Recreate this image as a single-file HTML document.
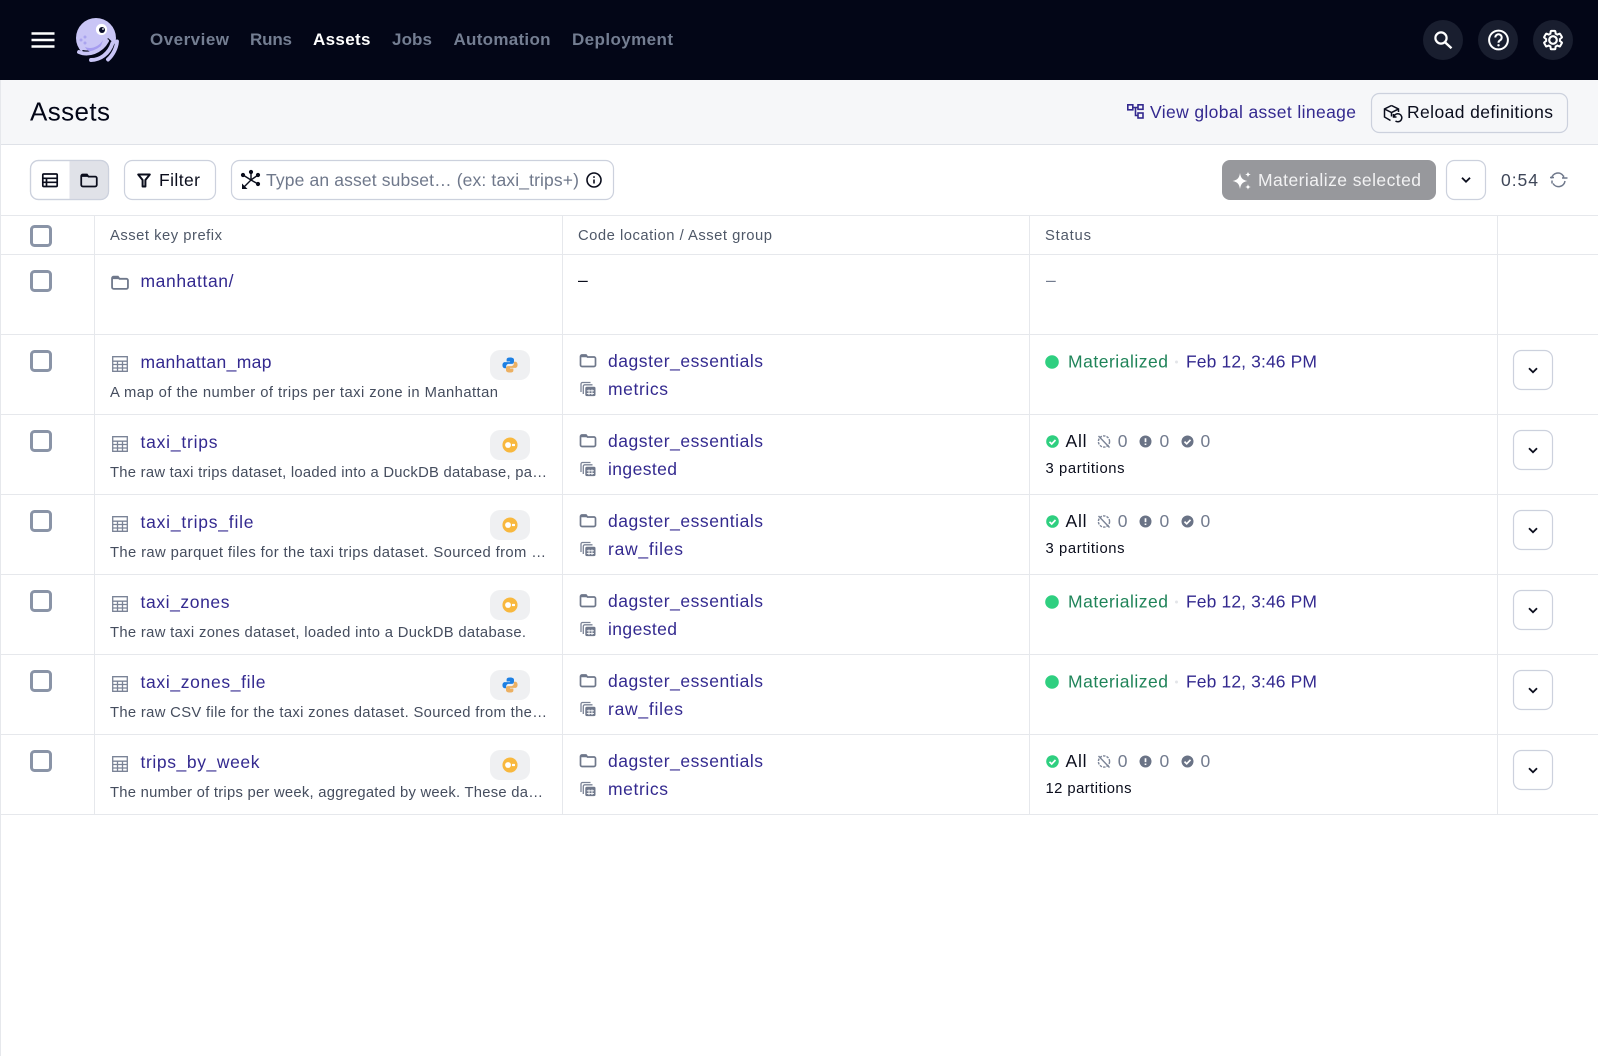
<!DOCTYPE html>
<html lang="en"><head><meta charset="utf-8"><title>Assets</title>
<style>
html,body{margin:0;padding:0;background:#fff;width:1598px;height:1056px;overflow:hidden}
svg{display:block;font-family:"Liberation Sans",sans-serif}
.nav{font-size:17px;font-weight:700;fill:#747e92}
.lnk{font-size:17.5px;fill:#33298f}
.d{font-size:14.8px;fill:#454d5e}
.h{font-size:14.8px;fill:#4f5868}
.t{font-size:17.5px;fill:#0a0d1c}
.z{font-size:17.5px;fill:#727b8e}
.p{font-size:14.8px;fill:#0a0d1c}
.b{fill:#fff;stroke:#ccd1dd;stroke-width:1.2}
.l{stroke:#e6e8ec;stroke-width:1}
</style></head><body>
<svg width="1598" height="1056" viewBox="0 0 1598 1056" xmlns="http://www.w3.org/2000/svg">
<defs>
<symbol id="folder" viewBox="0 0 17 14"><path d="M1 3a1.500 1.500 0 0 1 1.500-1.500H6.500L8 3.500H14.500A1.500 1.500 0 0 1 16 5v6.500a1.500 1.500 0 0 1-1.500 1.500h-12A1.500 1.500 0 0 1 1 11.500Z" fill="none" stroke="currentColor" stroke-width="1.700"/><path d="M1 1.800H6.200L7.700 3.800H1Z" fill="currentColor"/></symbol>
<symbol id="table" viewBox="0 0 16 16"><path d="M.7.7H15.300V15.300H.7ZM.7 5.200H15.300M.7 8.500H15.300M.7 12H15.300M5.500 5.200V15.300M10.500 5.200V15.300" fill="none" stroke="#7a8396" stroke-width="1.300"/></symbol>
<symbol id="group" viewBox="0 0 16 15"><path d="M1 10.500V2.500A1.500 1.500 0 0 1 2.500 1H10.500M3.300 12.500V4.800A1.500 1.500 0 0 1 4.800 3.300H12.500" fill="none" stroke="#7a8396" stroke-width="1.300"/><rect x="5.300" y="5.300" width="10.200" height="9.300" rx="1.500" fill="#6f788b"/><path d="M6.800 9.300h7.200M6.800 11.900h7.200M9 8v5.500M12 8v5.500" stroke="#fff" stroke-width=".9"/></symbol>
<symbol id="py" viewBox="0 0 18 18"><path d="M8.900.5C5.500.5 5.200 2 5.200 3v2h3.900v.8H3.200C1.700 5.800.5 7 .5 9.200c0 2.300 1.200 3.400 2.700 3.400h1.500v-2c0-1.500 1.300-2.800 2.800-2.800h3.700c1.200 0 2.300-1 2.300-2.300V3C13.500 1.500 12 .5 8.900.5Z" fill="#1c7fe3"/><path d="M9.100 17.500c3.400 0 3.700-1.500 3.700-2.500v-2H8.900v-.8h5.900c1.500 0 2.700-1.200 2.700-3.400 0-2.300-1.200-3.400-2.700-3.400h-1.500v2c0 1.500-1.300 2.800-2.800 2.800H6.800c-1.200 0-2.300 1-2.300 2.300V15c0 1.500 1.500 2.500 4.600 2.500Z" fill="#ecb062"/></symbol>
<symbol id="duck" viewBox="0 0 18 18"><circle cx="9" cy="9" r="8.500" fill="#f8b83e"/><circle cx="6.800" cy="9" r="3.300" fill="#fff"/><rect x="11.200" y="7.700" width="3.400" height="2.600" rx=".6" fill="#fff"/></symbol>
<symbol id="cv" viewBox="0 0 10 7"><path d="M1 1.200 5 5.200 9 1.200" fill="none" stroke="#0a0d1c" stroke-width="1.800"/></symbol>
<g id="ck"><rect x="31.500" y="1.500" width="19" height="19" rx="3" fill="#fff" stroke="#8a94a7" stroke-width="3"/></g>
<g id="btn"><rect x="1513.500" y="16.500" width="39" height="39" rx="8" class="b"/><use href="#cv" x="1528" y="33" width="10" height="7"/></g>
<g id="tagpy"><rect x="490" y="16" width="40" height="30" rx="10" fill="#eff0f2"/><use href="#py" x="502" y="23" width="16" height="16"/></g>
<g id="tagduck"><rect x="490" y="16" width="40" height="30" rx="10" fill="#eff0f2"/><use href="#duck" x="502" y="23" width="16" height="16"/></g>
<g id="tico"><use href="#table" x="112" y="22" width="16" height="16"/></g>
<g id="loc"><use href="#folder" x="579.500" y="19.500" width="17" height="14" color="#6f788b"/><use href="#group" x="580" y="47.500" width="16" height="15"/></g>
<g id="mat"><circle cx="1052" cy="28" r="6.800" fill="#2fcf80"/><text x="1068" y="33.500" class="lnk" style="fill:#1f8459" textLength="100">Materialized</text><circle cx="1176.500" cy="28" r="1.500" fill="#e3e5e9"/><text x="1186" y="33.500" class="lnk" textLength="131">Feb 12, 3:46 PM</text></g>
<g id="part"><circle cx="1052.500" cy="27.500" r="6.300" fill="#2fcf80"/><path d="M1049.500 27.800l2.200 2.200 3.800-4" fill="none" stroke="#fff" stroke-width="1.700"/>
<text x="1065.500" y="32.800" class="t" textLength="21">All</text>
<circle cx="1104" cy="27.500" r="5.600" fill="none" stroke="#7b8497" stroke-width="1.400" stroke-dasharray="2.500 1.100"/><path d="M1098.500 22l11 11.500" stroke="#7b8497" stroke-width="1.400"/>
<text x="1117.700" y="32.800" class="z" textLength="11">0</text>
<circle cx="1145.500" cy="27.500" r="6" fill="#6a7386"/><path d="M1145.500 24.300v3.800M1145.500 29.500v1.500" stroke="#fff" stroke-width="1.700"/>
<text x="1159.500" y="32.800" class="z" textLength="11">0</text>
<circle cx="1187.500" cy="27.500" r="6" fill="#6a7386"/><path d="M1184.500 27.600l2.200 2.200 3.800-4" fill="none" stroke="#fff" stroke-width="1.700"/>
<text x="1200.500" y="32.800" class="z" textLength="11">0</text></g>
</defs>

<!-- top nav -->
<rect width="1598" height="80" fill="#030617"/>
<path d="M31.500 33.500h23M31.500 40h23M31.500 46.500h23" stroke="#fff" stroke-width="2.600"/>
<!-- logo -->
<g>
<circle cx="96" cy="38" r="20" fill="#c9c5f6"/>
<path d="M83 50C93 52 103 47 108 38L116 45 112 60 92 62 78 54Z" fill="#030617"/>
<path d="M85 47c6 2.500 14 0 18-7-2 7-5 11-9 12-4 .5-7-1.500-9-5Z" fill="#a59cf0"/>
<g fill="none" stroke="#c9c5f6" stroke-width="3.900" stroke-linecap="round"><path d="M79 52C88 56 101 52 107 41"/><path d="M91 60C100 60 109 54 112.500 43"/><path d="M108 59.500C113 55 116.500 48 117 41.500"/></g>
<circle cx="101.500" cy="29.500" r="5.600" fill="#fff"/><circle cx="102" cy="30" r="3" fill="#0a0d2a"/><circle cx="103" cy="29" r=".9" fill="#fff"/>
<circle cx="81" cy="40" r="1.500" fill="#aaa4ee"/><circle cx="85" cy="37" r="1.500" fill="#aaa4ee"/><circle cx="85" cy="43" r="1.500" fill="#aaa4ee"/>
</g>
<text x="150" y="45" class="nav" textLength="79">Overview</text>
<text x="250" y="45" class="nav" textLength="42">Runs</text>
<text x="313" y="45" class="nav" style="fill:#fff" textLength="57.500">Assets</text>
<text x="392" y="45" class="nav" textLength="40">Jobs</text>
<text x="453.500" y="45" class="nav" textLength="97">Automation</text>
<text x="572" y="45" class="nav" textLength="101">Deployment</text>
<circle cx="1443" cy="40" r="20" fill="#191e2f"/><circle cx="1498" cy="40" r="20" fill="#191e2f"/><circle cx="1553" cy="40" r="20" fill="#191e2f"/>
<circle cx="1441" cy="38" r="5.600" fill="none" stroke="#fff" stroke-width="2.200"/><path d="M1445 42.300l6.500 6" stroke="#fff" stroke-width="2.400"/>
<circle cx="1498.500" cy="40" r="9.400" fill="none" stroke="#fff" stroke-width="2"/><path d="M1495.300 37.500a3.200 3.200 0 1 1 4.800 2.800c-1 .6-1.600 1.200-1.600 2.400" fill="none" stroke="#fff" stroke-width="2"/><circle cx="1498.500" cy="45.300" r="1.200" fill="#fff"/>
<g transform="translate(1542,29)" fill="none" stroke="#fff" stroke-width="2.200"><path d="M19.430 12.980c.04-.32.07-.64.07-.98s-.03-.66-.07-.98l2.110-1.650c.19-.15.24-.42.12-.64l-2-3.460c-.12-.22-.39-.3-.61-.22l-2.490 1c-.52-.4-1.080-.73-1.690-.98l-.38-2.650C14.460 2.180 14.250 2 14 2h-4c-.25 0-.46.18-.49.42l-.38 2.650c-.61.25-1.170.59-1.690.98l-2.490-1c-.23-.09-.49 0-.61.22l-2 3.460c-.13.22-.07.49.12.64l2.110 1.650c-.04.32-.07.65-.07.98s.03.66.07.98l-2.110 1.650c-.19.15-.24.42-.12.64l2 3.460c.12.22.39.3.61.22l2.490-1c.52.4 1.080.73 1.690.98l.38 2.650c.03.24.24.42.49.42h4c.25 0 .46-.18.49-.42l.38-2.650c.61-.25 1.170-.59 1.690-.98l2.490 1c.23.09.49 0 .61-.22l2-3.460c.12-.22.07-.49-.12-.64z" transform="scale(.92)"/><circle cx="11" cy="11" r="3.800"/></g>

<!-- page header -->
<rect y="80" width="1598" height="65" fill="#f6f7f9"/>
<line x1="0" y1="144.500" x2="1598" y2="144.500" stroke="#dfe2e8"/>
<text x="30" y="120.500" font-size="26" fill="#030617" textLength="80">Assets</text>
<g fill="none" stroke="#33298f" stroke-width="1.600"><rect x="1127.800" y="104.800" width="5" height="5"/><rect x="1138" y="104.800" width="5" height="4.500"/><rect x="1138" y="113" width="5" height="5"/><path d="M1133 107.500h5M1135.500 107.500v8h2.500"/></g>
<text x="1150" y="118" class="lnk" textLength="206">View global asset lineage</text>
<rect x="1371.500" y="93.500" width="196" height="39" rx="8" fill="#f6f7f9" stroke="#ccd1dd" stroke-width="1.200"/>
<g fill="none" stroke="#0a0d1c" stroke-width="1.500"><path d="M1391.500 105.500l-7 3.500v8l6 3.500M1391.500 105.500l7 3.500v3M1384.500 109l7 3.500 7-3.500M1391.500 112.500v4"/><path d="M1394 116.500a4 4 0 1 1 1.500 4.500M1393.500 114v3h3"/></g>
<text x="1407" y="118" class="t" textLength="146">Reload definitions</text>

<!-- toolbar -->
<rect x="30.500" y="160.500" width="78" height="39" rx="8" class="b"/>
<path d="M69.500 161H100.500a7.500 7.500 0 0 1 7.500 7.500V191.500a7.500 7.500 0 0 1-7.500 7.500H69.500Z" fill="#e0e2e8"/>
<rect x="30.500" y="160.500" width="78" height="39" rx="8" fill="none" stroke="#ccd1dd" stroke-width="1.200"/>
<g fill="none" stroke="#0a0d1c" stroke-width="1.700"><rect x="42.800" y="174" width="14.400" height="12.500" rx="1"/><path d="M42.800 178.300h14.400M42.800 182.300h14.400M46.500 178v8"/></g>
<use href="#folder" x="80" y="173" width="18" height="14.500" color="#0a0d1c"/>
<rect x="124.500" y="160.500" width="91" height="39" rx="8" class="b"/>
<path d="M138.200 174.500h11.600l-4.400 5.500v6.500h-2.800v-6.500z" fill="none" stroke="#0a0d1c" stroke-width="2" stroke-linejoin="round"/>
<text x="159" y="186" class="t" textLength="41">Filter</text>
<rect x="231.500" y="160.500" width="382" height="39" rx="8" class="b"/>
<g stroke="#0a0d1c" stroke-width="1.400" fill="#0a0d1c"><path d="M251 180V172M251 180l7-5M251 180l7 4M251 180l-8-5M251 180l-7 7" fill="none"/><circle cx="251" cy="172" r="1.400"/><circle cx="258" cy="175" r="1.400"/><circle cx="258" cy="184" r="1.400"/><circle cx="243" cy="175" r="1.400"/><path d="M242 183.500v5.500h5.500z" stroke="none"/></g>
<text x="266" y="186" font-size="17.500" fill="#6f788b" textLength="313">Type an asset subset… (ex: taxi_trips+)</text>
<circle cx="594" cy="180" r="7" fill="none" stroke="#0a0d1c" stroke-width="1.600"/><path d="M594 179.500v4M594 176.300v1.600" stroke="#0a0d1c" stroke-width="1.600"/>
<rect x="1222" y="160" width="214" height="40" rx="8" fill="#97989c"/>
<g fill="#fff"><path d="M1240 173c.8 5 2.500 7 7.500 8-5 1-6.700 3-7.500 8-.8-5-2.500-7-7.500-8 5-1 6.700-3 7.500-8Z"/><path d="M1248 171.500c.3 2 1 2.700 3 3-2 .3-2.700 1-3 3-.3-2-1-2.700-3-3 2-.3 2.700-1 3-3ZM1248 184c.3 2 1 2.700 3 3-2 .3-2.700 1-3 3-.3-2-1-2.700-3-3 2-.3 2.700-1 3-3Z"/></g>
<text x="1258" y="186" font-size="17.500" fill="#f2f2f3" textLength="163">Materialize selected</text>
<rect x="1446.500" y="160.500" width="39" height="39" rx="8" class="b"/><use href="#cv" x="1461" y="176.500" width="10" height="7"/>
<text x="1501" y="186" font-size="17.500" fill="#3f4759" textLength="37">0:54</text>
<g fill="none" stroke="#6f788b" stroke-width="1.500"><path d="M1551.500 178.500a6.500 6.500 0 0 1 12-2.300M1565 181a6.500 6.500 0 0 1-12 2.500"/><path d="M1550 177.500h4M1562 178h5.500M1563.500 175.500v3M1552 183.500v-3"/></g>

<!-- table lines -->
<line x1=".5" y1="80" x2=".5" y2="1056" class="l"/>
<line x1="0" y1="215.500" x2="1598" y2="215.500" class="l"/>
<line x1="0" y1="254.500" x2="1598" y2="254.500" class="l"/>
<line x1="0" y1="334.500" x2="1598" y2="334.500" class="l"/>
<line x1="0" y1="414.500" x2="1598" y2="414.500" class="l"/>
<line x1="0" y1="494.500" x2="1598" y2="494.500" class="l"/>
<line x1="0" y1="574.500" x2="1598" y2="574.500" class="l"/>
<line x1="0" y1="654.500" x2="1598" y2="654.500" class="l"/>
<line x1="0" y1="734.500" x2="1598" y2="734.500" class="l"/>
<line x1="0" y1="814.500" x2="1598" y2="814.500" class="l"/>
<line x1="94.500" y1="215" x2="94.500" y2="814" class="l"/>
<line x1="562.500" y1="215" x2="562.500" y2="814" class="l"/>
<line x1="1029.500" y1="215" x2="1029.500" y2="814" class="l"/>
<line x1="1497.500" y1="215" x2="1497.500" y2="814" class="l"/>

<!-- header row -->
<use href="#ck" y="225"/>
<text x="110" y="240" class="h" textLength="112">Asset key prefix</text>
<text x="578" y="240" class="h" textLength="194">Code location / Asset group</text>
<text x="1045" y="240" class="h" textLength="46">Status</text>

<!-- rows -->
<g transform="translate(0,254)"><use href="#ck" y="16"/><use href="#folder" x="111" y="21" width="18" height="15" color="#6f788b"/>
<text x="140.500" y="33" class="lnk" textLength="93">manhattan/</text>
<text x="578" y="32" class="t" textLength="9">–</text><text x="1046" y="32" class="z" textLength="10">–</text></g>

<g transform="translate(0,334)"><use href="#ck" y="16"/><use href="#tico"/><use href="#tagpy"/>
<text x="140.500" y="34" class="lnk" textLength="131">manhattan_map</text>
<text x="110" y="63" class="d" textLength="388">A map of the number of trips per taxi zone in Manhattan</text>
<use href="#loc"/><text x="608" y="33" class="lnk" textLength="155">dagster_essentials</text><text x="608" y="60.800" class="lnk" textLength="60">metrics</text>
<use href="#mat"/><use href="#btn"/></g>

<g transform="translate(0,414)"><use href="#ck" y="16"/><use href="#tico"/><use href="#tagduck"/>
<text x="140.500" y="34" class="lnk" textLength="77">taxi_trips</text>
<text x="110" y="63" class="d" textLength="437">The raw taxi trips dataset, loaded into a DuckDB database, pa…</text>
<use href="#loc"/><text x="608" y="33" class="lnk" textLength="155">dagster_essentials</text><text x="608" y="60.800" class="lnk" textLength="69">ingested</text>
<use href="#part"/><text x="1045.500" y="59" class="p" textLength="79">3 partitions</text><use href="#btn"/></g>

<g transform="translate(0,494)"><use href="#ck" y="16"/><use href="#tico"/><use href="#tagduck"/>
<text x="140.500" y="34" class="lnk" textLength="113">taxi_trips_file</text>
<text x="110" y="63" class="d" textLength="436">The raw parquet files for the taxi trips dataset. Sourced from …</text>
<use href="#loc"/><text x="608" y="33" class="lnk" textLength="155">dagster_essentials</text><text x="608" y="60.800" class="lnk" textLength="75">raw_files</text>
<use href="#part"/><text x="1045.500" y="59" class="p" textLength="79">3 partitions</text><use href="#btn"/></g>

<g transform="translate(0,574)"><use href="#ck" y="16"/><use href="#tico"/><use href="#tagduck"/>
<text x="140.500" y="34" class="lnk" textLength="89">taxi_zones</text>
<text x="110" y="63" class="d" textLength="416">The raw taxi zones dataset, loaded into a DuckDB database.</text>
<use href="#loc"/><text x="608" y="33" class="lnk" textLength="155">dagster_essentials</text><text x="608" y="60.800" class="lnk" textLength="69">ingested</text>
<use href="#mat"/><use href="#btn"/></g>

<g transform="translate(0,654)"><use href="#ck" y="16"/><use href="#tico"/><use href="#tagpy"/>
<text x="140.500" y="34" class="lnk" textLength="125">taxi_zones_file</text>
<text x="110" y="63" class="d" textLength="437">The raw CSV file for the taxi zones dataset. Sourced from the…</text>
<use href="#loc"/><text x="608" y="33" class="lnk" textLength="155">dagster_essentials</text><text x="608" y="60.800" class="lnk" textLength="75">raw_files</text>
<use href="#mat"/><use href="#btn"/></g>

<g transform="translate(0,734)"><use href="#ck" y="16"/><use href="#tico"/><use href="#tagduck"/>
<text x="140.500" y="34" class="lnk" textLength="119">trips_by_week</text>
<text x="110" y="63" class="d" textLength="433">The number of trips per week, aggregated by week. These da…</text>
<use href="#loc"/><text x="608" y="33" class="lnk" textLength="155">dagster_essentials</text><text x="608" y="60.800" class="lnk" textLength="60">metrics</text>
<use href="#part"/><text x="1045.500" y="59" class="p" textLength="86">12 partitions</text><use href="#btn"/></g>
</svg>
</body></html>
